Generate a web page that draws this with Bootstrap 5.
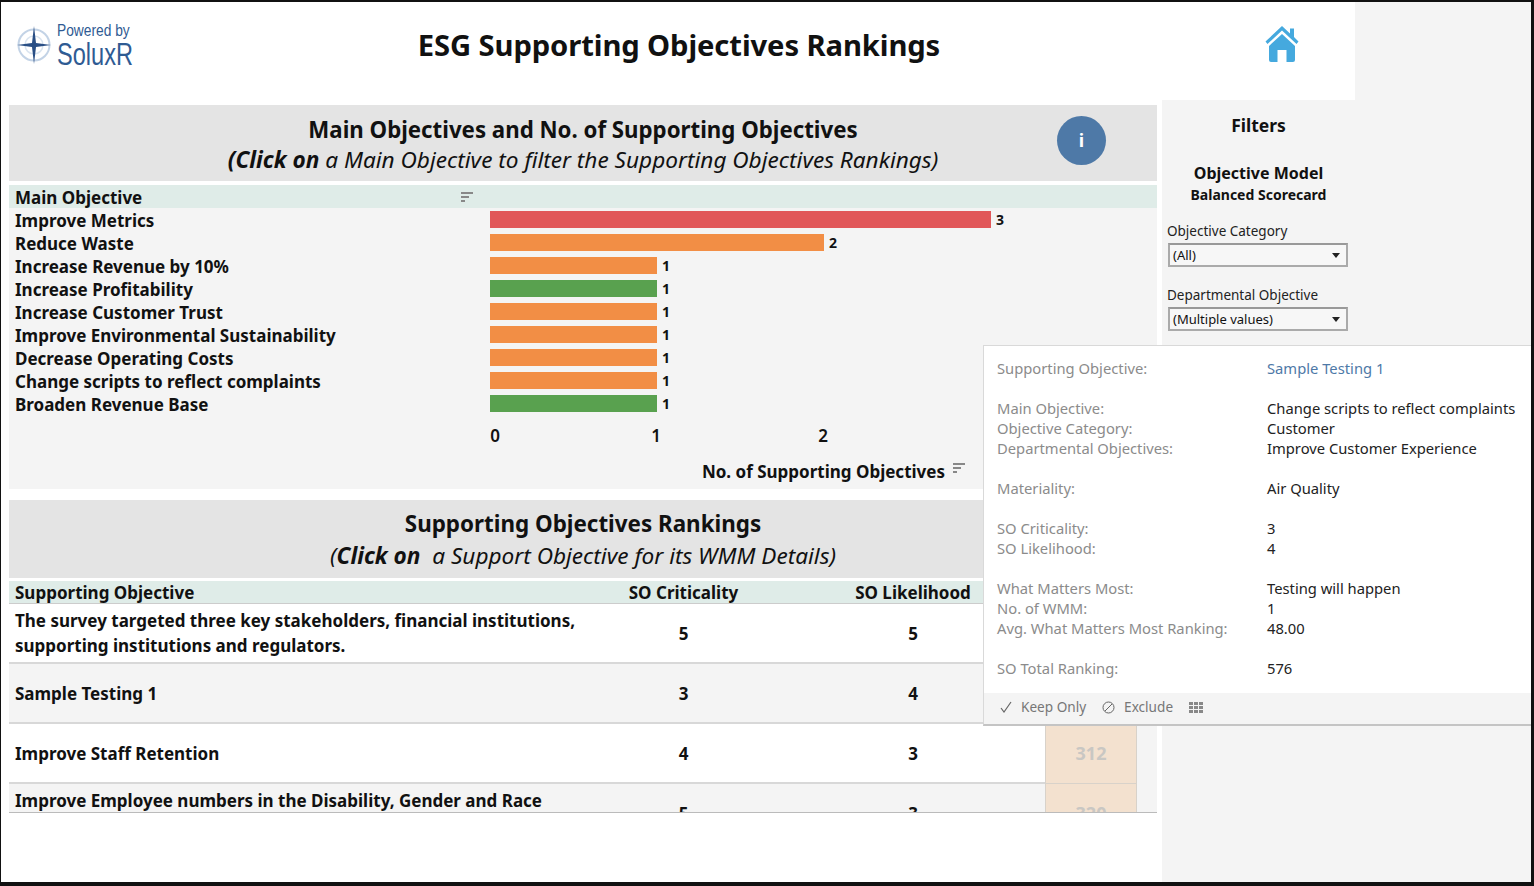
<!doctype html>
<html lang="en">
<head>
<meta charset="utf-8">
<title>ESG Supporting Objectives Rankings</title>
<link href="https://cdn.jsdelivr.net/npm/bootstrap@5.3.0/dist/css/bootstrap.min.css" rel="stylesheet">
<style>
html,body{height:100%;margin:0;overflow:hidden;background:#111}
body{font-family:"Noto Sans","Liberation Sans",sans-serif;color:#111}
.frame{width:1530px;height:880px;margin:2px 0 0 1px;background:#f4f4f4;position:relative}
.leftside{width:1354px}
.topbar{height:98px;background:#fff}
.logo{width:170px;padding:20px 0 0 15px;color:#2f5b93}
.logotxt{margin-left:5px;font-family:"Liberation Sans",sans-serif}
.logotop{font-size:16px;line-height:17px;transform:scaleX(.86);transform-origin:left center;white-space:nowrap}
.logobig{font-size:31px;line-height:32px;transform:scaleX(.76);transform-origin:left center}
.apptitle{width:1016px;font-size:29.2px;line-height:1;font-weight:700;margin:0;padding:29px 0 0 0;text-align:center;letter-spacing:-.1px}
.homewrap{padding:23px 0 0 78px}
.lowrow{height:782px}
.whitepane{width:1161px;height:782px;background:#fff;padding:5px 5px 0 8px}
.titlepanel{background:#e4e4e4;height:76px;position:relative;text-align:center}
.tp1{font-size:22.25px;font-weight:700;line-height:30px;padding-top:10px}
.tp2{font-size:22.6px;font-style:italic;line-height:30px}
.infocirc{position:absolute;left:1048px;top:11px;width:49px;height:49px;border-radius:50%;background:#4e79a7;color:#fff;font-weight:700;font-size:18px;font-style:normal}
.tealhead{background:#dfece8;font-weight:700}
.charthead{height:23px;margin-top:4px;font-size:17px;line-height:25px;padding-left:6px;position:relative}
.sorticon{position:absolute}
.sa{left:452px;top:7px}
.chartbody{background:#f4f4f4;height:281px;padding-top:3px}
.barrow{height:22.94px;font-size:17px;font-weight:700;line-height:23px}
.barlab{width:481px;margin-top:-2px;padding-left:6px;white-space:nowrap}
.barfill{height:17px}
.barval{font-size:14px;font-weight:700;line-height:17px;margin-left:5px}
.cred{background:#e15759}
.corg{background:#f28e45}
.cgrn{background:#59a14f}
.axisline{position:relative;height:24px;margin-top:7px;font-size:17px;font-weight:600;line-height:24px}
.tick{position:absolute;top:0;width:30px;text-align:center}
.axistitle{position:relative;margin-top:12px;height:24px;font-size:17px;font-weight:700;line-height:24px;padding-right:212px;text-align:right}
.panel2{height:78px;margin-top:11px}
.tp3{font-size:22.4px;font-weight:700;line-height:30px;padding-top:9px}
.tp4{font-size:22.6px;font-style:italic;line-height:34px}
.tablehead{height:23px;margin-top:3px;font-size:17px;line-height:23px;border-bottom:1px solid #ccc}
.cola{width:596px;padding-left:6px}
.colb{width:157px;text-align:center}
.colc{width:283px;padding-left:19px;white-space:nowrap;text-align:center}
.tableclip{height:209px;overflow:hidden;border-bottom:1px solid #bbb}
.trow{height:60px;font-size:17px;font-weight:700;line-height:25px}
.tcells{width:1036px;flex:none;border-bottom:2px solid #d8d8d8}
.tcells.alt{background:#f4f4f4}
.tan{width:92px;flex:none;background:#f3e1cf;text-align:center;color:#c9c7c3;font-size:18px;font-weight:700;border:solid #d8d2ca;border-width:0 1px 1px 1px}
.rest{width:20px;flex:none;background:#f4f4f4}
.filterpane{width:193px;padding:0 5px}
.ftitle{font-size:17.5px;font-weight:700;line-height:24px;padding-top:13px;text-align:center}
.fmodel{font-size:16px;font-weight:700;line-height:24px;margin-top:24px;text-align:center}
.fval{font-size:14px;font-weight:700;line-height:20px;text-align:center}
.flabel{font-size:13.5px;line-height:18px;color:#222}
.fl1{margin-top:17px}
.fl2{margin-top:19px}
.fbox{width:180px;margin:3px 0 0 1px;height:24px;border:2px solid #aaa;border-top-color:#999;background:#f7f7f7;font-size:13px;line-height:20px;padding:0 6px 0 3px}
.caret{width:0;height:0;border-left:4px solid transparent;border-right:4px solid transparent;border-top:5px solid #222}
.tipbox{position:absolute;left:982px;top:343px;width:548px;height:381px;background:#fff;border:1px solid #d9d9d9;border-bottom:3px solid #c4c4c4;border-right:0}
.tipbody{height:347px;padding:12px 0 0 13px;font-size:14.75px;line-height:20px}
.tipl{width:270px;color:#8b8b8b}
.tipv{color:#222}
.tiplink{color:#4e79a7}
.tipgap{height:20px}
.tipfoot{height:31px;background:#f4f4f4;font-size:13.6px;color:#777;padding:0 0 3px 16px;line-height:26px}
.tfi{margin-right:9px}
.tfx{margin-left:16px}
</style>
</head>
<body>
<div class="frame d-flex">
  <div class="leftside">
    <div class="topbar d-flex">
      <div class="logo d-flex">
        <svg width="36" height="44" viewBox="0 0 36 44" aria-hidden="true">
          <circle cx="18" cy="23" r="15.5" fill="none" stroke="#c3d3e6" stroke-width="2"/>
          <circle cx="18" cy="23" r="9" fill="none" stroke="#dbe5f0" stroke-width="1.5"/>
          <path d="M18 4 L20 21 L35 23 L20 25 L18 42 L16 25 L1 23 L16 21 Z" fill="#2a4f85"/>
        </svg>
        <div class="logotxt">
          <div class="logotop">Powered by</div>
          <div class="logobig">SoluxR</div>
        </div>
      </div>
      <h1 class="apptitle">ESG Supporting Objectives Rankings</h1>
      <div class="homewrap">
        <svg width="34" height="38" viewBox="0 0 34 38" aria-hidden="true">
          <path d="M17 1 L25 8.5 V3.5 H29 V12 L33.5 16.5 L31.5 19 L17 5.5 L2.5 19 L.5 16.5 Z" fill="#45a9de"/>
          <path d="M17 9 L30 21 V35 Q30 37 28 37 H21.5 V25 H12.5 V37 H6 Q4 37 4 35 V21 Z" fill="#45a9de"/>
        </svg>
      </div>
    </div>
    <div class="lowrow d-flex">
      <div class="whitepane">
        <div class="titlepanel">
          <div class="tp1">Main Objectives and No. of Supporting Objectives</div>
          <div class="tp2"><b>(Click on</b> a Main Objective to filter the Supporting Objectives Rankings)</div>
          <div class="infocirc d-flex align-items-center justify-content-center">i</div>
        </div>
        <div class="tealhead charthead">Main Objective
          <svg class="sorticon sa" width="13" height="12" viewBox="0 0 13 12" aria-hidden="true"><path d="M0 1h12M0 5h8M0 9h4" stroke="#888" stroke-width="2" fill="none"/></svg>
        </div>
        <div class="chartbody">
          <div class="barrow d-flex"><div class="barlab">Improve Metrics</div><div class="barfill cred" style="width:501px"></div><div class="barval">3</div></div>
          <div class="barrow d-flex"><div class="barlab">Reduce Waste</div><div class="barfill corg" style="width:334px"></div><div class="barval">2</div></div>
          <div class="barrow d-flex"><div class="barlab">Increase Revenue by 10%</div><div class="barfill corg" style="width:167px"></div><div class="barval">1</div></div>
          <div class="barrow d-flex"><div class="barlab">Increase Profitability</div><div class="barfill cgrn" style="width:167px"></div><div class="barval">1</div></div>
          <div class="barrow d-flex"><div class="barlab">Increase Customer Trust</div><div class="barfill corg" style="width:167px"></div><div class="barval">1</div></div>
          <div class="barrow d-flex"><div class="barlab">Improve Environmental Sustainability</div><div class="barfill corg" style="width:167px"></div><div class="barval">1</div></div>
          <div class="barrow d-flex"><div class="barlab">Decrease Operating Costs</div><div class="barfill corg" style="width:167px"></div><div class="barval">1</div></div>
          <div class="barrow d-flex"><div class="barlab">Change scripts to reflect complaints</div><div class="barfill corg" style="width:167px"></div><div class="barval">1</div></div>
          <div class="barrow d-flex"><div class="barlab">Broaden Revenue Base</div><div class="barfill cgrn" style="width:167px"></div><div class="barval">1</div></div>
          <div class="axisline">
            <span class="tick" style="left:471px">0</span><span class="tick" style="left:632px">1</span><span class="tick" style="left:799px">2</span>
          </div>
          <div class="axistitle">No. of Supporting Objectives
            <svg class="sorticon" style="left:944px;top:3px" width="13" height="12" viewBox="0 0 13 12" aria-hidden="true"><path d="M0 1h12M0 5h8M0 9h4" stroke="#888" stroke-width="2" fill="none"/></svg>
          </div>
        </div>
        <div class="titlepanel panel2">
          <div class="tp3">Supporting Objectives Rankings</div>
          <div class="tp4">(<b>Click on</b>&nbsp; a Support Objective for its WMM Details)</div>
        </div>
        <div class="tealhead tablehead d-flex">
          <div class="cola">Supporting Objective</div>
          <div class="colb">SO Criticality</div>
          <div class="colc">SO Likelihood</div>
        </div>
        <div class="tableclip">
          <div class="trow d-flex">
            <div class="tcells d-flex align-items-center"><div class="cola">The survey targeted three key stakeholders, financial institutions, supporting institutions and regulators.</div><div class="colb">5</div><div class="colc">5</div></div>
            <div class="tan"></div><div class="rest"></div>
          </div>
          <div class="trow d-flex">
            <div class="tcells alt d-flex align-items-center"><div class="cola">Sample Testing 1</div><div class="colb">3</div><div class="colc">4</div></div>
            <div class="tan"></div><div class="rest"></div>
          </div>
          <div class="trow d-flex">
            <div class="tcells d-flex align-items-center"><div class="cola">Improve Staff Retention</div><div class="colb">4</div><div class="colc">3</div></div>
            <div class="tan d-flex align-items-center justify-content-center">312</div><div class="rest"></div>
          </div>
          <div class="trow d-flex">
            <div class="tcells alt d-flex align-items-center"><div class="cola">Improve Employee numbers in the Disability, Gender and Race Representation</div><div class="colb">5</div><div class="colc">3</div></div>
            <div class="tan d-flex align-items-center justify-content-center">320</div><div class="rest"></div>
          </div>
        </div>
      </div>
      <div class="filterpane">
        <div class="ftitle">Filters</div>
        <div class="fmodel">Objective Model</div>
        <div class="fval">Balanced Scorecard</div>
        <div class="flabel fl1">Objective Category</div>
        <div class="fbox d-flex align-items-center justify-content-between"><span>(All)</span><span class="caret"></span></div>
        <div class="flabel fl2">Departmental Objective</div>
        <div class="fbox d-flex align-items-center justify-content-between"><span>(Multiple values)</span><span class="caret"></span></div>
      </div>
    </div>
  </div>
  <div class="tipbox">
    <div class="tipbody">
      <div class="d-flex"><div class="tipl">Supporting Objective:</div><div class="tiplink">Sample Testing 1</div></div>
      <div class="tipgap"></div>
      <div class="d-flex"><div class="tipl">Main Objective:</div><div class="tipv">Change scripts to reflect complaints</div></div>
      <div class="d-flex"><div class="tipl">Objective Category:</div><div class="tipv">Customer</div></div>
      <div class="d-flex"><div class="tipl">Departmental Objectives:</div><div class="tipv">Improve Customer Experience</div></div>
      <div class="tipgap"></div>
      <div class="d-flex"><div class="tipl">Materiality:</div><div class="tipv">Air Quality</div></div>
      <div class="tipgap"></div>
      <div class="d-flex"><div class="tipl">SO Criticality:</div><div class="tipv">3</div></div>
      <div class="d-flex"><div class="tipl">SO Likelihood:</div><div class="tipv">4</div></div>
      <div class="tipgap"></div>
      <div class="d-flex"><div class="tipl">What Matters Most:</div><div class="tipv">Testing will happen</div></div>
      <div class="d-flex"><div class="tipl">No. of WMM:</div><div class="tipv">1</div></div>
      <div class="d-flex"><div class="tipl">Avg. What Matters Most Ranking:</div><div class="tipv">48.00</div></div>
      <div class="tipgap"></div>
      <div class="d-flex"><div class="tipl">SO Total Ranking:</div><div class="tipv">576</div></div>
    </div>
    <div class="tipfoot d-flex align-items-center">
      <svg class="tfi" width="12" height="12" viewBox="0 0 12 12" aria-hidden="true"><path d="M1 7l3 4 7-10" fill="none" stroke="#666" stroke-width="1.2"/></svg>
      <span>Keep Only</span>
      <svg class="tfi tfx" width="13" height="13" viewBox="0 0 13 13" aria-hidden="true"><circle cx="6.5" cy="6.5" r="5.5" fill="none" stroke="#666"/><path d="M3 10L10 3" stroke="#666"/></svg>
      <span>Exclude</span>
      <svg class="tfx" width="14" height="11" viewBox="0 0 14 11" aria-hidden="true"><path d="M0 0h4v3H0zM5 0h4v3H5zM10 0h4v3h-4zM0 4h4v3H0zM5 4h4v3H5zM10 4h4v3h-4zM0 8h4v3H0zM5 8h4v3H5zM10 8h4v3h-4z" fill="#888"/></svg>
    </div>
  </div>
</div>
<script src="https://cdn.jsdelivr.net/npm/bootstrap@5.3.0/dist/js/bootstrap.bundle.min.js"></script>
</body>
</html>
